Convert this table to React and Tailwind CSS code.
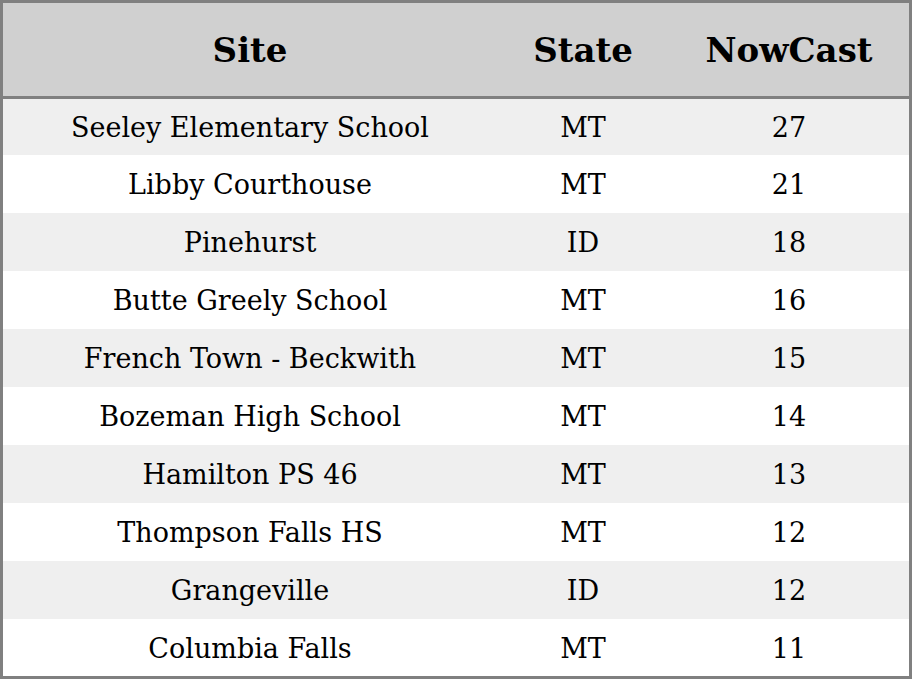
import React from "react";

const rows = [
  ["Seeley Elementary School", "MT", "27"],
  ["Libby Courthouse", "MT", "21"],
  ["Pinehurst", "ID", "18"],
  ["Butte Greely School", "MT", "16"],
  ["French Town - Beckwith", "MT", "15"],
  ["Bozeman High School", "MT", "14"],
  ["Hamilton PS 46", "MT", "13"],
  ["Thompson Falls HS", "MT", "12"],
  ["Grangeville", "ID", "12"],
  ["Columbia Falls", "MT", "11"],
];

export default function App() {
  return (
    <div className="w-[912px] h-[679px] bg-white border-[3px] border-[#808080] overflow-hidden text-black" style={{ fontFamily: '"DejaVu Serif", serif' }}>
      <div className="grid grid-cols-[494px_172px_240px] h-[96px] bg-[#d0d0d0] border-b-[3px] border-[#808080] items-center text-center font-bold text-[34px] leading-none">
        <div>Site</div>
        <div>State</div>
        <div>NowCast</div>
      </div>
      <div className="flex flex-col">
        {rows.map((r, i) => (
          <div
            key={i}
            className={`grid grid-cols-[494px_172px_240px] items-center text-center text-[27px] leading-none ${i === 0 ? "h-[56px]" : "h-[58px]"} ${i % 2 === 0 ? "bg-[#efefef]" : "bg-white"}`}
          >
            <div>{r[0]}</div>
            <div>{r[1]}</div>
            <div>{r[2]}</div>
          </div>
        ))}
      </div>
    </div>
  );
}
